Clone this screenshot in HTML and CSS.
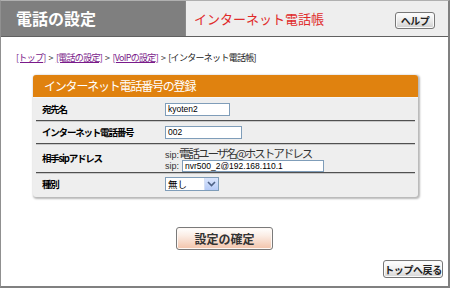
FILE: index.html
```html
<!DOCTYPE html>
<html lang="ja">
<head>
<meta charset="utf-8">
<link rel="stylesheet" href="styles.css">
</head>
<body>
<div class="frame">
  <div class="header">
    <div class="title">電話の設定</div>
    <div class="subbar">
      <span class="subtitle">インターネット電話帳</span>
      <span class="btn help">ヘルプ</span>
    </div>
  </div>
  <div class="crumbs">
    <a class="link">[トップ]</a><span class="sep">&gt;</span><a class="link">[電話の設定]</a><span class="sep">&gt;</span><a class="link">[VoIPの設定]</a><span class="sep">&gt;</span><span>[インターネット電話帳]</span>
  </div>
  <div class="box">
    <div class="boxhead">インターネット電話番号の登録</div>
    <div class="row">
      <div class="label">宛先名</div>
      <div class="field"><span class="input w1">kyoten2</span></div>
    </div>
    <div class="row">
      <div class="label">インターネット電話番号</div>
      <div class="field"><span class="input w2">002</span></div>
    </div>
    <div class="row sip">
      <div class="label">相手sipアドレス</div>
      <div class="field col">
        <div class="hint"><span class="pre">sip:</span><span class="big">電話ユーザ名@ホストアドレス</span></div>
        <div class="line2"><span class="pre">sip:</span><span class="input w3">nvr500_2@192.168.110.1</span></div>
      </div>
    </div>
    <div class="row last">
      <div class="label">種別</div>
      <div class="field">
        <span class="select"><span class="seltext">無し</span><span class="arrow"><svg width="9" height="6" viewBox="0 0 9 6"><path d="M1 1 L4.5 4.5 L8 1" fill="none" stroke="#4d6185" stroke-width="1.6"/></svg></span></span>
      </div>
    </div>
  </div>
  <div class="submitwrap"><span class="btn submit">設定の確定</span></div>
  <div class="backwrap"><span class="btn back">トップへ戻る</span></div>
</div>
</body>
</html>
```
FILE: styles.css
```css
html, body {
  margin: 0;
  padding: 0;
  background: #ffffff;
}
body {
  font-family: "Noto Sans CJK JP", "Liberation Sans", sans-serif;
  color: #000;
}
.frame {
  box-sizing: border-box;
  width: 450px;
  height: 288px;
  border-top: 1px solid #b0b0b0;
  border-left: 1px solid #909090;
  border-right: 2px solid #808080;
  border-bottom: 2px solid #808080;
  display: flex;
  flex-direction: column;
}
.header {
  display: flex;
  height: 35px;
  border-bottom: 1px solid #606060;
}
.title {
  width: 169px;
  padding-left: 15px;
  background: #7f7f7f;
  color: #ffffff;
  font-size: 16px;
  font-weight: bold;
  line-height: 35px;
}
.subbar {
  flex: 1;
  background: #eeeeee;
  display: flex;
  align-items: center;
  justify-content: space-between;
  padding: 0 13px 0 8px;
  border-left: 1px solid #8a8a8a;
}
.subtitle {
  color: #e02a2a;
  font-size: 13px;
  line-height: 16px;
}
.btn {
  display: inline-flex;
  align-items: center;
  justify-content: center;
  box-sizing: border-box;
  border: 1px solid #777;
  border-radius: 3px;
  color: #222;
  font-weight: bold;
  white-space: nowrap;
}
.help {
  width: 40px;
  height: 17px;
  font-size: 10px;
  letter-spacing: -0.5px;
  background: linear-gradient(#ffffff, #e6e6e6 60%, #cfcfcf);
  box-shadow: inset 0 0 0 1px #fafafa;
  margin-top: 3px;
}
.crumbs {
  margin: 15px 0 0 15px;
  font-size: 9px;
  line-height: 12px;
  letter-spacing: -0.7px;
  color: #222;
  white-space: nowrap;
}
.link {
  color: #7a1a8a;
  text-decoration: underline;
}
.sep {
  color: #333;
  margin: 0 3px;
}
.box {
  margin: 11px 0 0 32px;
  width: 385px;
  background: #eeeeee;
  border-radius: 3px;
  box-shadow: 1px 1px 2px 1px #b8b8b8;
  padding-bottom: 2px;
}
.boxhead {
  height: 22px;
  background: #e0820f;
  border-radius: 3px 3px 0 0;
  color: #ffffff;
  font-size: 12px;
  letter-spacing: -1.2px;
  line-height: 22px;
  padding-left: 11px;
  border-bottom: 1px solid #f6f6f6;
}
.row {
  display: flex;
  align-items: center;
  height: 22px;
  margin: 0 3px;
  border-bottom: 1px solid #505050;
  box-shadow: 0 1px 0 #c8c8c8;
}
.row.sip {
  height: 28px;
}
.row.last {
  border-bottom: none;
  box-shadow: none;
}
.label {
  width: 123px;
  padding-left: 6px;
  font-size: 9.5px;
  letter-spacing: -1.2px;
  font-weight: bold;
}
.field {
  display: flex;
  align-items: center;
}
.field.col {
  flex-direction: column;
  align-items: flex-start;
}
.input {
  box-sizing: border-box;
  display: inline-block;
  height: 13px;
  background: #fff;
  border: 1px solid #7f9db9;
  font-family: "Liberation Sans", sans-serif;
  font-size: 8.5px;
  line-height: 11px;
  padding-left: 2px;
}
.w1 { width: 65px; }
.w2 { width: 77px; }
.w3 { width: 142px; height: 12px; line-height: 10px; }
.hint {
  line-height: 12px;
  height: 12px;
  white-space: nowrap;
}
.pre {
  font-family: "Liberation Sans", sans-serif;
  font-size: 9px;
  color: #333;
}
.big {
  font-size: 11.5px;
  letter-spacing: -2px;
  color: #333;
}
.line2 {
  display: flex;
  align-items: center;
  gap: 3px;
  margin-top: 3px;
}
.select {
  box-sizing: border-box;
  display: inline-flex;
  align-items: center;
  width: 54px;
  height: 14px;
  background: #fff;
  border: 1px solid #7f9db9;
}
.seltext {
  flex: 1;
  font-size: 9.5px;
  padding-left: 2px;
  line-height: 12px;
}
.arrow {
  width: 13px;
  height: 12px;
  display: flex;
  align-items: center;
  justify-content: center;
  background: linear-gradient(#dbe6fd, #b6cbf7);
  border-left: 1px solid #d6e0f5;
}
.submitwrap {
  display: flex;
  justify-content: center;
  margin-top: 30px;
}
.submit {
  width: 97px;
  height: 23px;
  font-size: 12px;
  color: #333;
  border-color: #7a7a7a;
  background: linear-gradient(#ffffff 0%, #fbeee6 35%, #f2c3aa 100%);
  box-shadow: inset 0 0 0 1px #fff8f4;
}
.backwrap {
  display: flex;
  justify-content: flex-end;
  margin-top: 10px;
  padding-right: 5px;
}
.back {
  width: 60px;
  height: 18px;
  font-size: 10px;
  letter-spacing: -0.4px;
  background: linear-gradient(#ffffff, #ececec 60%, #d4d4d4);
  box-shadow: inset 0 0 0 1px #fafafa;
}
```
